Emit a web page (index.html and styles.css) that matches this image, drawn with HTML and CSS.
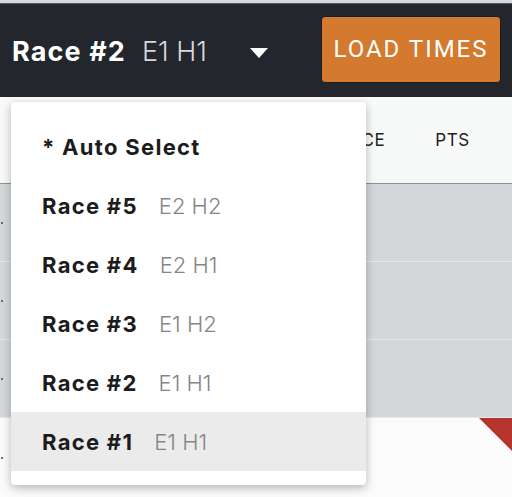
FILE: index.html
```html
<!DOCTYPE html>
<html>
<head>
<meta charset="utf-8">
<link rel="stylesheet" href="styles.css">
</head>
<body>
<div class="topbar"></div>
<header class="header">
  <div class="race-select">
    <span class="race-name">Race #2</span>
    <span class="race-meta">E1 H1</span>
    <span class="caret"></span>
  </div>
  <button class="load-btn">LOAD TIMES</button>
</header>
<main class="table">
  <div class="thead">
    <span class="th th-place">PLACE</span>
    <span class="th th-pts">PTS</span>
  </div>
  <div class="row row-grey"><span class="dot"></span></div>
  <div class="row row-grey"><span class="dot"></span></div>
  <div class="row row-grey"><span class="dot"></span></div>
  <div class="row row-white"><span class="dot"></span><span class="flag"></span></div>
</main>
<ul class="menu">
  <li class="menu-item"><span class="item-name">* Auto Select</span></li>
  <li class="menu-item"><span class="item-name">Race #5</span><span class="item-meta">E2 H2</span></li>
  <li class="menu-item"><span class="item-name">Race #4</span><span class="item-meta">E2 H1</span></li>
  <li class="menu-item"><span class="item-name">Race #3</span><span class="item-meta">E1 H2</span></li>
  <li class="menu-item"><span class="item-name">Race #2</span><span class="item-meta">E1 H1</span></li>
  <li class="menu-item is-active"><span class="item-name">Race #1</span><span class="item-meta">E1 H1</span></li>
</ul>
</body>
</html>
```

FILE: styles.css
```css
* { box-sizing: border-box; }
html, body { margin: 0; padding: 0; }
body {
  width: 512px;
  height: 497px;
  overflow: hidden;
  background: #f8f9f9;
  font-family: Inter, "Noto Sans", sans-serif;
  position: relative;
  -webkit-font-smoothing: antialiased;
}
.topbar {
  height: 4px;
  background: #d6d9db;
  border-bottom: 1px solid #55585e;
}
.header {
  height: 93px;
  background: #23262d;
  display: flex;
  align-items: center;
  justify-content: space-between;
  padding: 0 11px 0 12px;
}
.race-select {
  display: flex;
  align-items: center;
  color: #fff;
  margin-top: 2px;
}
.race-name {
  font-size: 27px;
  font-weight: 700;
  letter-spacing: 1.1px;
}
.race-meta {
  font-size: 27px;
  font-weight: 300;
  margin-left: 16px;
  color: #d8d9db;
}
.caret {
  width: 0;
  height: 0;
  border-left: 9px solid transparent;
  border-right: 9px solid transparent;
  border-top: 10px solid #fff;
  margin-left: 43px;
  margin-top: 2px;
}
.load-btn {
  width: 180px;
  height: 67px;
  margin-top: -3px;
  background: #d47a2e;
  color: #fff;
  border: 1px solid #1a1c20;
  border-radius: 4px;
  font-family: Roboto, Inter, sans-serif;
  font-size: 24px;
  font-weight: 400;
  letter-spacing: 2px;
  padding: 0;
}
.table {
  display: flex;
  flex-direction: column;
}
.thead {
  height: 87px;
  display: flex;
  align-items: center;
  border-bottom: 1px solid #8e9193;
  background: #f8f9f9;
  font-size: 17px;
  color: #222;
}
.th-place { margin-left: 328px; letter-spacing: 0.6px; }
.th-pts { margin-left: 50px; letter-spacing: 0.6px; }
.row {
  height: 78px;
  border-bottom: 1px solid #e8e9ea;
  display: flex;
  align-items: center;
  position: relative;
}
.row-grey { background: #d4d7d9; }
.row-white { background: #fbfbfb; height: 80px; border-bottom: none; }
.dot {
  width: 2px;
  height: 2px;
  background: #6a6d70;
  margin-left: 1px;
}
.flag {
  position: absolute;
  top: 0;
  right: 0;
  width: 0;
  height: 0;
  border-top: 33px solid #b3352d;
  border-left: 33px solid transparent;
}
.menu {
  position: absolute;
  top: 102px;
  left: 11px;
  width: 355px;
  margin: 0;
  padding: 15px 0 14px;
  list-style: none;
  background: #fff;
  border-radius: 4px;
  box-shadow: 0 3px 10px rgba(0, 0, 0, 0.28);
}
.menu-item {
  height: 59px;
  display: flex;
  align-items: center;
  padding-left: 31px;
}
.menu-item.is-active { background: #ebebeb; }
.item-name {
  font-size: 22px;
  font-weight: 700;
  color: #1c1c1c;
  letter-spacing: 1.3px;
}
.item-meta {
  font-size: 22px;
  font-weight: 300;
  color: #858585;
  margin-left: 21px;
}
```
